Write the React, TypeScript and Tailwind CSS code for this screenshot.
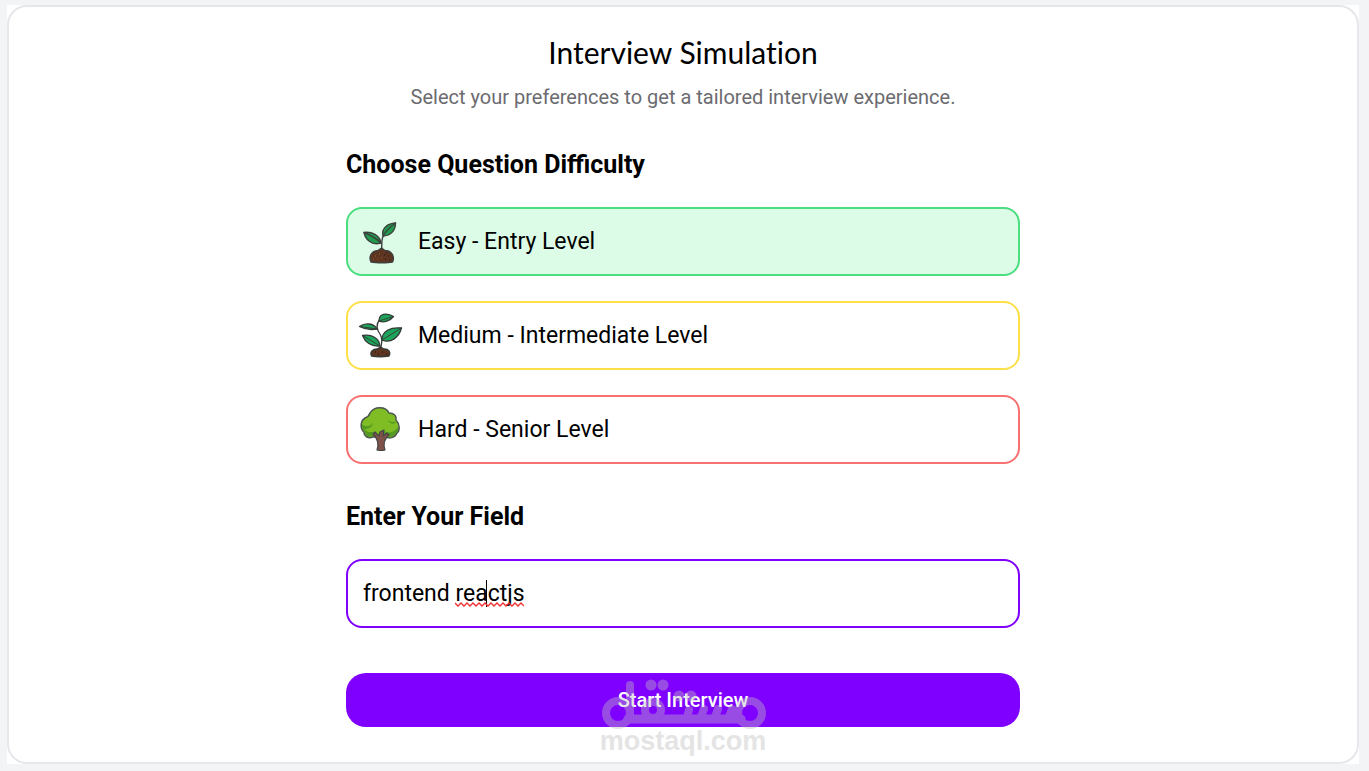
import { useState } from "react";
import type { ReactNode } from "react";

type Difficulty = "easy" | "medium" | "hard";

type DifficultyOption = {
    id: Difficulty;
    label: string;
    icon: ReactNode;
    border: string;
    selected: string;
};

const SeedlingIcon = () => (
    <svg viewBox="0 2 60 60" className="size-full" aria-hidden="true">
        <g stroke="#3f3f3f" strokeWidth="1.4" strokeLinejoin="round" strokeLinecap="round">
            <path d="M31.5 40C32.5 33 30 27 37 22" fill="none" />
            <path d="M31 33C21 36 15.5 29 14 22.5C22 21.5 29.5 25 31 33Z" fill="#1f9d4c" />
            <path d="M14 22.5C20 25 26 28 31 33" fill="none" />
            <path d="M33 26C31 18 38 13.5 45.5 13C45.5 20 41 26 33 26Z" fill="#1f9d4c" />
            <path d="M33 26C36 21 40 17 45.5 13" fill="none" />
            <path d="M21 52C18.5 47 21 41 28 40.5L31.5 38L35 40.5C42 40.5 45 47 42.5 52C38 53 26 53 21 52Z" fill="#5d3520" />
        </g>
        <path d="M25 46h1M29 44h1M27 49h1M23 49h1M31 48h1" stroke="#9a6032" strokeWidth="1" />
        <path d="M34 45h1M38 46h1M35 49h1M39 50h1M36 43h1" stroke="#26190f" strokeWidth="1" />
    </svg>
);

const PlantIcon = () => (
    <svg viewBox="0 2 60 60" className="size-full" aria-hidden="true">
        <g stroke="#343a37" strokeWidth="1.3" strokeLinejoin="round" strokeLinecap="round">
            <path d="M30.5 46C31 40 33.5 37 30.5 31C27 26 25 21 29.5 16" fill="none" />
            <path d="M29 17C29 10 36 8 43.5 12.5C40 17 34 19 29 17Z" fill="#1da35a" />
            <path d="M27 25C21 26 14 25 9.5 22.5C15 18.5 24 19 27 25Z" fill="#1da35a" />
            <path d="M32 36C32 27 40 23 51.5 24C49 33 41 40 32 36Z" fill="#1da35a" />
            <path d="M30 42C21 43 15 38 12.5 31.5C22 30 29 34 30 42Z" fill="#1da35a" />
            <path d="M29 17L43.5 12.5M27 25L9.5 22.5M32 36L51.5 24M30 42L12.5 31.5" fill="none" strokeWidth="0.9" />
            <path d="M21.5 52C19.5 48 23 45 27 45L30.5 43L34 45C39 45 41 48 39 52Q30 53.5 21.5 52Z" fill="#5d3520" />
        </g>
        <path d="M25 48h1M28 50h1M32 48h1M36 50h1" stroke="#24170f" strokeWidth="1" />
    </svg>
);

const TreeIcon = () => (
    <svg viewBox="0 2 60 60" className="size-full" aria-hidden="true">
        <path
            d="M23 39C18 41 14 38 14 34C10 31 10 23 15 20C18 19 19 18 20 15C24 8 36 8 39 15C44 15 47 18 46 22C50 26 50 33 47 35C45 40 39 41 36 39Z"
            fill="#80bd24"
            stroke="#4c5650"
            strokeWidth="1.5"
        />
        <path
            d="M12 26C15 30 21 28 23 25C22 30 18 31 15 31C17 35 21 34 23 34C25 38 32 37 34 33C39 36 45 34 48 29C48 33 47 35 45 36C42 40 38 39 36 38H23C18 40 15 37 15 33C12 31 12 29 12 26ZM38 22C42 25 45 25 47 22C46 27 40 27 38 22Z"
            fill="#559a20"
        />
        <path
            d="M27 52C29 46 28 41 23 36L25 34L29 38L30 34L34 32L33 38L37 35L39 37C34 41 33 46 35 52Q31 53 27 52Z"
            fill="#80534a"
            stroke="#454545"
            strokeWidth="1.2"
            strokeLinejoin="round"
        />
    </svg>
);

const difficulties: DifficultyOption[] = [
    {
        id: "easy",
        label: "Easy - Entry Level",
        icon: <SeedlingIcon />,
        border: "border-[#4ade80]",
        selected: "bg-[#dcfce7]",
    },
    {
        id: "medium",
        label: "Medium - Intermediate Level",
        icon: <PlantIcon />,
        border: "border-[#fde047]",
        selected: "bg-yellow-100",
    },
    {
        id: "hard",
        label: "Hard - Senior Level",
        icon: <TreeIcon />,
        border: "border-[#f87171]",
        selected: "bg-red-100",
    },
];

const Watermark = () => (
    <div className="pointer-events-none absolute -bottom-[26px] left-1/2 flex w-42 -translate-x-1/2 flex-col items-center opacity-40">
        <svg viewBox="0 0 168 52" className="h-[52px] w-full" fill="none" stroke="#bebebe" aria-hidden="true">
            <g strokeWidth="8" strokeLinecap="round">
                <circle cx="19" cy="36" r="12" />
                <circle cx="151" cy="36" r="12" />
                <circle cx="54" cy="33" r="8" />
                <path d="M31 8V36" />
                <path d="M29 42H142" strokeWidth="9" />
                <path d="M88 40L90 33M102 40L105 32M116 40L119 32M130 40L133 32" />
            </g>
            <path d="M52 8h0.01M64 8h0.01M80 19h0.01M92 19h0.01" strokeWidth="11" strokeLinecap="round" />
        </svg>
        <span className="font-['Liberation_Sans',sans-serif] text-[27px] leading-6 font-bold text-[#bebebe]">
            mostaql.com
        </span>
    </div>
);

export default function App() {
    const [difficulty, setDifficulty] = useState<Difficulty>("easy");
    const [field, setField] = useState("frontend reactjs");

    return (
        <main className="min-h-screen bg-gray-100 pt-[5px] pr-[10px] pb-[7px] pl-[7px] font-['Roboto',sans-serif] text-black">
            <div className="bg-white">
                <div className="flex flex-col items-center rounded-[20px] border-2 border-gray-200 px-4 pt-6 pb-[35px]">
                    <h1 className="font-['Lato',sans-serif] text-[30px] leading-[42px] [font-variant-ligatures:none]">
                        Interview Simulation
                    </h1>
                    <p className="mt-[10px] text-xl leading-7 text-[#6b6b70]">
                        Select your preferences to get a tailored interview experience.
                    </p>

                    <form
                        className="mt-9 w-full max-w-[674px]"
                        onSubmit={(e) => e.preventDefault()}
                    >
                        <fieldset>
                            <legend className="mb-6 text-[25px] leading-9 font-bold">
                                Choose Question Difficulty
                            </legend>
                            <div className="flex flex-col gap-[25px]">
                                {difficulties.map((item) => (
                                    <label
                                        key={item.id}
                                        className={`relative flex h-[69px] cursor-pointer items-center rounded-2xl border-2 pl-0.5 text-[23px] ${item.border} ${
                                            difficulty === item.id ? item.selected : "bg-white"
                                        }`}
                                    >
                                        <input
                                            type="radio"
                                            name="difficulty"
                                            value={item.id}
                                            checked={difficulty === item.id}
                                            onChange={() => setDifficulty(item.id)}
                                            className="sr-only"
                                        />
                                        <span className="size-[60px] shrink-0">{item.icon}</span>
                                        <span className="ml-2 pt-0.5">{item.label}</span>
                                    </label>
                                ))}
                            </div>
                        </fieldset>

                        <label htmlFor="field" className="mt-[35px] block text-[25px] leading-9 font-bold">
                            Enter Your Field
                        </label>
                        <div className="relative mt-6">
                            <input
                                id="field"
                                type="text"
                                value={field}
                                onChange={(e) => setField(e.target.value)}
                                className="h-[69px] w-full rounded-2xl border-2 border-[#8000ff] px-[15px] text-[23px] outline-none"
                            />
                            {/* caret and spell-check underline */}
                            <span className="pointer-events-none absolute top-[21px] left-[140px] h-[27px] w-px bg-black" />
                            <svg
                                viewBox="0 0 69 6"
                                className="pointer-events-none absolute top-[43px] left-[109px] h-[6px] w-[69px]"
                                aria-hidden="true"
                            >
                                <path
                                    d="M0 1L3 4L6 1L9 4L12 1L15 4L18 1L21 4L24 1L27 4L30 1L33 4L36 1L39 4L42 1L45 4L48 1L51 4L54 1L57 4L60 1L63 4L66 1L69 4"
                                    fill="none"
                                    stroke="#f03030"
                                    strokeWidth="1.4"
                                />
                            </svg>
                        </div>

                        <div className="relative mt-[45px]">
                            <button
                                type="submit"
                                className="h-[54px] w-full rounded-[20px] bg-[#8000ff] text-xl font-medium text-white"
                            >
                                Start Interview
                            </button>
                            <Watermark />
                        </div>
                    </form>
                </div>
            </div>
        </main>
    );
}
